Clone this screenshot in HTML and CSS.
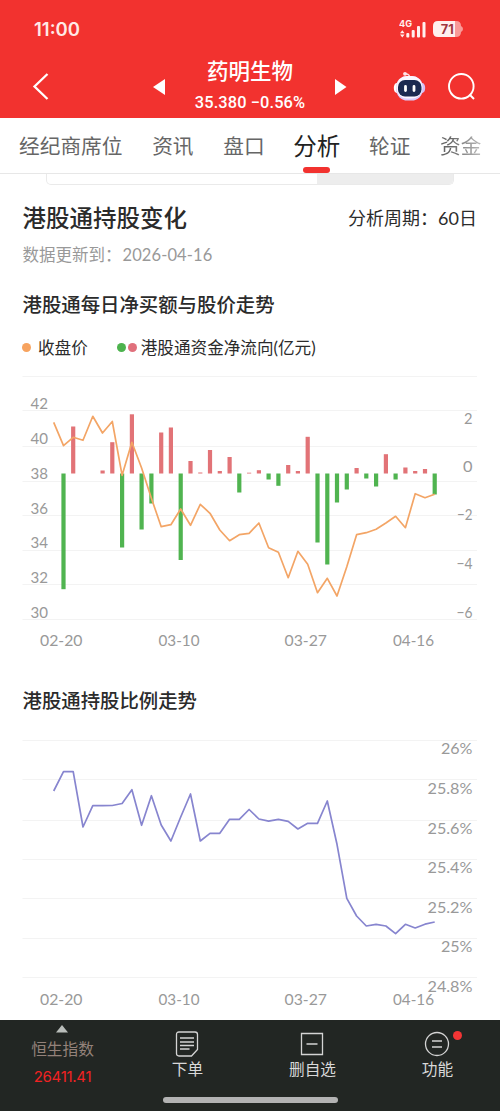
FILE: index.html
```html
<!DOCTYPE html>
<html lang="zh-CN">
<head>
  <meta charset="UTF-8">
  <meta name="viewport" content="width=device-width, initial-scale=1.0">
  <title>药明生物 - 分析</title>
  <link rel="stylesheet" href="styles.css">
</head>
<body>
  <header class="header">
    <div class="status">
      <span class="time">11:00</span>
      <svg class="signal" width="28" height="20" viewBox="0 0 28 20">
        <text x="0" y="8" textLength="13" lengthAdjust="spacingAndGlyphs">4G</text>
        <path d="M1 14.2l2.3-3 2.3 3zM1 15.4l2.3 3 2.3-3z"/>
        <rect x="7.3" y="14" width="3" height="4.5" rx="1"/>
        <rect x="12.7" y="11" width="3" height="7.5" rx="1"/>
        <rect x="18" y="7" width="3" height="11.5" rx="1"/>
        <rect x="23.5" y="3" width="3" height="15.5" rx="1"/>
      </svg>
      <svg class="battery" width="31" height="18" viewBox="0 0 31 18">
        <path class="battery-rest" d="M21 1h2q5 0 5 5 2 1 2 3t-2 3q0 5-5 5h-2z"/>
        <path class="battery-full" d="M5 1h17v16H5q-5 0-5-5V6q0-5 5-5z"/>
        <text x="7.7" y="13.6" textLength="13" lengthAdjust="spacingAndGlyphs">71</text>
      </svg>
    </div>
    <nav class="nav">
      <svg class="back" width="17" height="28" viewBox="0 0 17 28"><path d="M15.5 1L2.5 13.5l13 12.5"/></svg>
      <svg class="arrow prev" width="12" height="16" viewBox="0 0 12 16"><path d="M12 0v16L0 8z"/></svg>
      <div class="stock">
        <h1>药明生物</h1>
        <p>35.380 −0.56%</p>
      </div>
      <svg class="arrow next" width="12" height="16" viewBox="0 0 12 16"><path d="M0 0v16l11.5-8z"/></svg>
      <svg class="robot" width="33" height="32" viewBox="0 0 33 32">
        <path d="M12.5 3q4-.5 4.2 4" fill="none" stroke="#ffdce0" stroke-width="1.5"/>
        <circle cx="12" cy="2.8" r="1.9" fill="#ffe4e8"/>
        <ellipse cx="3.8" cy="17" rx="3" ry="5" fill="#fff"/>
        <ellipse cx="29.2" cy="17" rx="3" ry="5" fill="#d8bdf5"/>
        <rect x="3" y="5" width="27" height="24.5" rx="11.5" fill="#dccbfa"/>
        <rect x="3.4" y="5" width="26" height="22.5" rx="10.5" fill="#fbf7ff"/>
        <rect x="5" y="9" width="23.5" height="16.5" rx="7" fill="#1c2a50"/>
        <path d="M12.5 15.5v4M21 15.5v4" stroke="#fff" stroke-width="2.8" stroke-linecap="round"/>
      </svg>
      <svg class="search" width="28" height="28" viewBox="0 0 28 28"><circle cx="13.3" cy="13.3" r="12.3"/><path d="M21.5 21.5l4.5 4.5"/></svg>
    </nav>
  </header>

  <div class="tabs">
    <span class="tab">经纪商席位</span>
    <span class="tab">资讯</span>
    <span class="tab">盘口</span>
    <span class="tab active">分析</span>
    <span class="tab">轮证</span>
    <span class="tab cut">资金</span>
  </div>

  <main class="content">
    <div class="switch"><span></span></div>

    <div class="title-row">
      <h2>港股通持股变化</h2>
      <span class="period">分析周期：60日</span>
    </div>
    <p class="updated">数据更新到：<span>2026-04-16</span></p>

    <h3>港股通每日净买额与股价走势</h3>
    <div class="legend">
      <i class="dot orange"></i><span>收盘价</span>
      <i class="dot green"></i><i class="dot red"></i><span>港股通资金净流向(亿元)</span>
    </div>
    <svg class="chart" id="flowChart" width="500" height="290" viewBox="0 370 500 290"></svg>

    <h3 class="second">港股通持股比例走势</h3>
    <svg class="chart" id="ratioChart" width="500" height="303" viewBox="0 717 500 303"></svg>
  </main>

  <footer class="footer">
    <div class="menu">
      <div class="item index">
        <svg width="12" height="8" viewBox="0 0 12 8"><path d="M6 0l6 7.5H0z"/></svg>
        <span>恒生指数</span>
        <b>26411.41</b>
      </div>
      <div class="item">
        <svg class="icon" width="26" height="26" viewBox="0 0 26 26"><path d="M5 1h16q2.500 0 2.500 2.500v15L17.500 25H5q-2.500 0-2.500-2.500v-19Q2.500 1 5 1zM6 7h14M6 11h14M6 14.500h14M6 18h9.500"/></svg>
        <span>下单</span>
      </div>
      <div class="item">
        <svg class="icon" width="26" height="26" viewBox="0 0 26 26"><path d="M2.500 2.500h21v21h-21zM7.500 13h11"/></svg>
        <span>删自选</span>
      </div>
      <div class="item">
        <svg class="icon" width="26" height="26" viewBox="0 0 26 26"><circle cx="13" cy="13" r="11.5"/><path d="M8 10h10M8 16h10"/></svg>
        <span>功能</span>
        <i class="badge"></i>
      </div>
    </div>
    <div class="home-bar"></div>
  </footer>

  <script>
    const START = 53.7;
    const STEP = 9.77;
    const ZERO = 473.5;

    const price = [422.3, 445.7, 437.3, 440.3, 416.3, 433, 421.5, 475.3, 442.3, 468, 498.3, 526.7, 524.7, 509, 525.3, 504.3, 513.3, 530, 540.7, 534.7,
      533.3, 523, 547.7, 552.3, 577.7, 551.3, 564.3, 592.7, 578.3, 596, 566.7, 534.7, 532.7, 529.3, 523, 516.3, 527.7, 493.7, 497.7, 494.3];
    const flow = [0, -115.7, 47, 0, 0, 3, 31.3, -74, 59.2, -56, -30, 41, 46, -86.5, 12.5, 1, 23.5, 2.5, 16.5, -19,
      0.8, 3.3, -6, -12.3, 8.5, 2.5, 36.7, -69, -91, -29, -16, 5.5, -5, -13, 19.3, -6, 6, 2.5, 4.5, -21];
    const ratio = [791, 771.7, 771.7, 827, 805.6, 805.6, 805.5, 803.5, 789.7, 825.3, 795.7, 825, 841, 817, 794, 841, 833.3, 833.3, 819.3, 819.3,
      809.5, 819, 821.2, 819.3, 821.3, 829, 823.3, 823.3, 801, 844.3, 898.3, 916, 926, 924.3, 926, 933.7, 924.3, 928, 924.2, 922];

    const grid = ys => ys.map(y => `<path class="grid" d="M22.5 ${y}H477"/>`).join("");
    const line = (ys, name) => `<polyline class="${name}" points="${ys.map((y, i) => (START + i * STEP).toFixed(1) + "," + y).join(" ")}"/>`;
    const label = (text, x, y, width, anchor) =>
      `<text x="${x}" y="${y}" text-anchor="${anchor || "start"}" textLength="${width}" lengthAdjust="spacingAndGlyphs">${text}</text>`;
    const dates = y => label("02-20", 40, y, 42.5) + label("03-10", 158.5, y, 41) + label("03-27", 284.5, y, 42.5) + label("04-16", 393, y, 41);

    const bars = flow.map((v, i) => v === 0 ? "" :
      `<rect class="${v > 0 ? "up" : "down"}" x="${(START + i * STEP - 2.1).toFixed(1)}" y="${v > 0 ? ZERO - v : ZERO}" width="4.2" height="${Math.abs(v)}"/>`).join("");

    document.getElementById("flowChart").innerHTML =
      grid([376.5, 410.5, 446.5, 481.5, 515.5, 550.5, 584.5, 619.5]) + bars + line(price, "price") +
      [42, 40, 38, 36, 34, 32, 30].map((n, i) => label(n, 30.5, 409.4 + i * 34.7, 17.5)).join("") +
      label("2", 472.5, 423.5, 8.5, "end") + label("0", 472.5, 472, 9.5, "end") +
      label("−2", 472.5, 520.3, 15.5, "end") + label("−4", 472.5, 568.8, 16, "end") + label("−6", 472.5, 617.6, 16, "end") +
      dates(646);

    document.getElementById("ratioChart").innerHTML =
      grid([740.5, 779.5, 820.5, 859.5, 898.5, 938.5, 977.5]) + line(ratio, "ratio") +
      ["26%", "25.8%", "25.6%", "25.4%", "25.2%", "25%", "24.8%"].map((t, i) => label(t, 472.5, 754.3 + i * 39.6, t.length > 3 ? 45 : 31.5, "end")).join("") +
      dates(1004.7);
  </script>
</body>
</html>
```
FILE: styles.css
```css
* {
  box-sizing: border-box;
}
body {
  margin: 0;
  width: 500px;
  height: 1111px;
  overflow: hidden;
  background: #fff;
  color: #2b2b2b;
  font-family: Lato, "Noto Sans CJK SC", sans-serif;
}
h1, h2, h3, p {
  margin: 0;
}
svg {
  display: block;
  flex: none;
}
.header {
  height: 118px;
  background: #f2322f;
  color: #fff;
}
.status {
  display: flex;
  align-items: center;
  height: 58px;
  padding-left: 34px;
}
.time {
  width: 365px;
  font-family: Inter, sans-serif;
  font-size: 18.5px;
  font-weight: 600;
  color: #ffe9e6;
}
.signal {
  fill: #fff0ee;
}
.signal text {
  font: 700 9px Inter, sans-serif;
}
.battery {
  margin-left: 6px;
}
.battery-full {
  fill: #fff0ee;
}
.battery-rest {
  fill: #f99a98;
}
.battery text {
  font: 700 12.5px Inter, sans-serif;
  fill: #a03540;
}
.nav {
  display: flex;
  align-items: center;
  height: 58px;
  padding-left: 32px;
}
.back {
  fill: none;
  stroke: #fff;
  stroke-width: 2.3;
}
.arrow {
  fill: #fff;
}
.prev {
  margin-left: 104px;
}
.stock {
  width: 170px;
  text-align: center;
}
.stock h1 {
  font-size: 21.5px;
  line-height: 31px;
  font-weight: 500;
}
.stock p {
  font: 500 16.4px/32px Roboto, sans-serif;
  letter-spacing: 0.1px;
  white-space: nowrap;
}
.robot {
  margin-left: 46px;
}
.search {
  margin-left: 22px;
  fill: none;
  stroke: #fff;
  stroke-width: 1.9;
}
.tabs {
  display: flex;
  align-items: center;
  gap: 29.7px;
  height: 56px;
  padding: 0 0 2px 19px;
  border-bottom: 1px solid #e7e7e7;
  font-size: 20.7px;
  color: #666;
  white-space: nowrap;
}
.active {
  position: relative;
  margin: 0 -1px;
  font-size: 23.5px;
  color: #222;
}
.active::after {
  content: "";
  position: absolute;
  left: 10px;
  bottom: -11px;
  width: 27px;
  height: 6px;
  border-radius: 3px;
  background: #f2322f;
}
.cut {
  background: linear-gradient(90deg, #666 25%, #bbb);
  background-clip: text;
  color: transparent;
}
.content {
  height: 846px;
}
.switch {
  display: flex;
  justify-content: flex-end;
  width: 408px;
  height: 11px;
  margin-left: 46px;
  border: 1px solid #eaeaea;
  border-top: 0;
  border-radius: 0 0 5px 5px;
  overflow: hidden;
}
.switch span {
  width: 136px;
  background: #ededed;
}
.title-row {
  display: flex;
  justify-content: space-between;
  align-items: center;
  height: 66px;
  padding: 0 23px 2px 22.5px;
}
.title-row h2 {
  font-size: 23.5px;
  font-weight: 500;
}
.period {
  font-size: 18px;
}
.updated {
  height: 20px;
  margin-top: -6px;
  padding-left: 22.5px;
  font-size: 16.5px;
  line-height: 20px;
  color: #999;
}
.updated span {
  margin-left: 1px;
  letter-spacing: 0.1px;
}
h3 {
  height: 32px;
  margin-top: 24px;
  padding-left: 22.5px;
  font-size: 19.4px;
  line-height: 32px;
  font-weight: 500;
}
.legend {
  display: flex;
  align-items: center;
  height: 28px;
  margin: 12px 0 9px;
  padding-left: 22px;
  font-size: 16.6px;
}
.dot {
  width: 9px;
  height: 9px;
  border-radius: 50%;
}
.legend span {
  margin-left: 6px;
}
.legend .red + span {
  margin-left: 4px;
}
.orange {
  margin-right: 1px;
  background: #f7a35f;
}
.green {
  margin-left: 29px;
  background: #4db34e;
}
.red {
  margin-left: 2px;
  background: #e0707c;
}
.chart text {
  font: 400 16px Lato, sans-serif;
  fill: #999;
}
.grid {
  stroke: #f3f3f3;
}
.up {
  fill: #e27377;
}
.down {
  fill: #50b450;
}
.price, .ratio {
  fill: none;
  stroke: #f3a566;
  stroke-width: 1.7;
  stroke-linejoin: round;
}
.ratio {
  stroke: #8785cf;
}
.second {
  margin-top: 25px;
}
.footer {
  height: 91px;
  background: #222623;
  color: #d9d9d9;
}
.menu {
  display: grid;
  grid-template-columns: repeat(4, 1fr);
  height: 77px;
}
.item {
  position: relative;
  display: flex;
  flex-direction: column;
  align-items: center;
  padding-top: 11px;
  font-size: 15.7px;
  line-height: 24px;
}
.icon {
  margin-right: 1px;
  fill: none;
  stroke: #d4d4d4;
  stroke-width: 1.3;
}
.index {
  padding-top: 5px;
  color: #94827a;
}
.index svg {
  margin-right: 1px;
  fill: #b9bdba;
}
.index span {
  margin-top: 4px;
}
.index b {
  margin-top: 4px;
  font: 400 15px/24px Inter, sans-serif;
  letter-spacing: -0.3px;
  color: #f22222;
}
.badge {
  position: absolute;
  top: 11px;
  right: 38px;
  width: 9px;
  height: 9px;
  border-radius: 50%;
  background: #f33535;
}
.home-bar {
  width: 175px;
  height: 6px;
  margin: 0 auto;
  border-radius: 3px;
  background: #b3b3b3;
}
```
